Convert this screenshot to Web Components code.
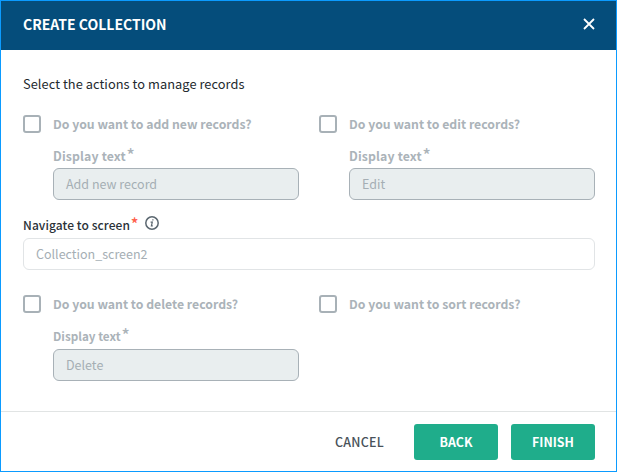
<!DOCTYPE html>
<html lang="en">
<head>
<meta charset="utf-8">
<title>Create collection</title>
<style>
body { margin: 0; background: #fff; font-family: "Noto Sans CJK SC", "Noto Sans", sans-serif; }
</style>
</head>
<body>
<collection-dialog heading="CREATE COLLECTION">
  <action-grid>
    <action-option label="Do you want to add new records?">
      <text-field caption="Display text" value="Add new record"></text-field>
    </action-option>
    <action-option label="Do you want to edit records?">
      <text-field caption="Display text" value="Edit"></text-field>
    </action-option>
  </action-grid>
  <text-field wide caption="Navigate to screen" value="Collection_screen2"></text-field>
  <action-grid>
    <action-option label="Do you want to delete records?">
      <text-field compact caption="Display text" value="Delete"></text-field>
    </action-option>
    <action-option label="Do you want to sort records?"></action-option>
  </action-grid>
  <dialog-button slot="actions" plain>CANCEL</dialog-button>
  <dialog-button slot="actions">BACK</dialog-button>
  <dialog-button slot="actions">FINISH</dialog-button>
</collection-dialog>
<script>
class BaseElement extends HTMLElement {
  constructor() {
    super();
    this.attachShadow({ mode: "open" });
  }
  connectedCallback() { this.shadowRoot.innerHTML = this.render(); }
  attr(name) { return this.getAttribute(name) || ""; }
}

customElements.define("collection-dialog", class extends BaseElement {
  render() {
    return `<style>
      :host { display: flex; flex-direction: column; box-sizing: border-box; width: 617px; height: 472px;
        border: 1px solid #0b9bff; background: #fff; }
      header { display: flex; justify-content: space-between; box-sizing: border-box; height: 49px;
        padding: 13px 21px 0 22px; background: #054d7b; color: #fff; }
      h1 { margin: 0; font-size: 14px; line-height: 20px; font-weight: 700; letter-spacing: 0; }
      header svg { margin-top: 4px; }
      main { flex: 1; padding: 23px 21px 0 22px; }
      p { margin: 0 0 20px; font-size: 12.8px; line-height: 22px; letter-spacing: .06px; color: #23292e; }
      footer { display: flex; justify-content: flex-end; box-sizing: border-box; height: 60px;
        border-top: 1px solid #e1e4e4; padding: 12px 21px 0; gap: 13px; }
    </style>
    <header><h1>${this.attr("heading")}</h1>
      <svg width="12" height="12" viewBox="0 0 12 12" fill="none" stroke="#fff" stroke-width="1.8"><path d="M1 1l10 10M11 1L1 11"/></svg>
    </header>
    <main><p>Select the actions to manage records</p><slot></slot></main>
    <footer><slot name="actions"></slot></footer>`;
  }
});

customElements.define("action-grid", class extends BaseElement {
  render() {
    return `<style>:host { display: grid; grid-template-columns: 276px 276px; column-gap: 20px; }</style><slot></slot>`;
  }
});

customElements.define("action-option", class extends BaseElement {
  render() {
    return `<style>
      :host { display: block; color: #abb3b9; }
      .row { display: flex; align-items: center; gap: 12px; height: 18px; }
      .box { box-sizing: border-box; width: 18px; height: 18px; border: 2px solid #a8b1b7; border-radius: 3px; }
      .label { font-size: 12.25px; line-height: 18px; font-weight: 700; white-space: nowrap; }
      .body { padding-left: 30px; }
    </style>
    <div class="row"><span class="box"></span><span class="label">${this.attr("label")}</span></div>
    <div class="body"><slot></slot></div>`;
  }
});

customElements.define("text-field", class extends BaseElement {
  render() {
    const info = this.hasAttribute("wide")
      ? `<svg class="info" width="14" height="14" viewBox="0 0 14 14" fill="none" stroke="#5b6770">
          <circle cx="7" cy="7" r="6.2" stroke-width="1.5"/>
          <path d="M5.6 6.1h1.7L6.4 9.8h1.4M7.3 3.9h1.2" stroke-width="1.2"/></svg>` : "";
    return `<style>
      :host { display: block; }
      .caption { display: flex; height: 20px; margin-top: 13px; padding-bottom: 2px; line-height: 20px;
        font-size: 12.3px; font-weight: 700; letter-spacing: .14px; white-space: nowrap; }
      :host([compact]) .caption { font-size: 11.7px; letter-spacing: 0; padding-bottom: 3px; }
      .star { font-size: 17px; margin: -1px 0 0 .8px; font-weight: 500; letter-spacing: 0; }
      .input { display: block; box-sizing: border-box; height: 32px; border: 1px solid #a8b1b7; border-radius: 6px;
        background: #e9eeef; padding: 0 12px; font-size: 12.5px; line-height: 30px; font-weight: 400; color: #a5aeb4; }
      :host([wide]) .caption { color: #2b3238; font-weight: 500; font-size: 12px; letter-spacing: .08px; margin-top: 15px; padding-bottom: 3px; }
      :host([wide]) .star { color: #ff5f4c; font-size: 16px; margin-top: -2px; }
      :host([wide]) .input { background: #fff; border-color: #e1e4e6; margin-bottom: 25px; }
      .info { margin: 1px 0 0 6.2px; }
    </style>
    <div class="caption"><span>${this.attr("caption")}</span><span class="star">*</span>${info}</div>
    <div class="input">${this.attr("value")}</div>`;
  }
});

customElements.define("dialog-button", class extends BaseElement {
  render() {
    return `<style>
      :host { display: block; box-sizing: border-box; width: 84px; height: 36px; border-radius: 3px;
        background: #1fad8b; color: #fff; font-size: 12.4px; font-weight: 700; line-height: 37px; text-align: center; }
      :host([plain]) { background: none; color: #48525a; font-weight: 500; font-size: 12.5px; line-height: 35px; letter-spacing: .25px; padding-left: 1px; }
    </style><slot></slot>`;
  }
});
</script>
</body>
</html>
